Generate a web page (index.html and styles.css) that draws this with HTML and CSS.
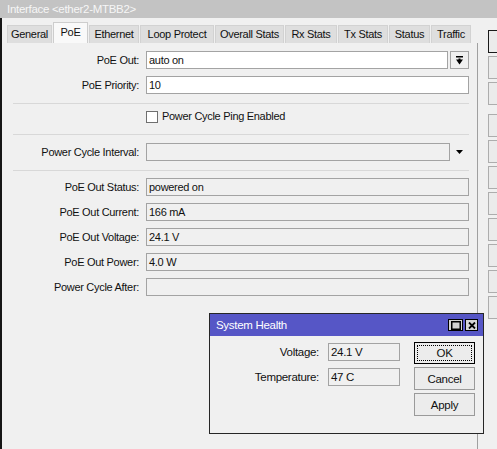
FILE: index.html
```html
<!DOCTYPE html>
<html>
<head>
<meta charset="utf-8">
<title>Interface</title>
<link rel="stylesheet" href="styles.css">
</head>
<body>
<div class="win">
  <div class="titlebar">Interface &lt;ether2-MTBB2&gt;</div>
  <div class="main">
    <div class="left">
      <div class="tabs">
        <div class="tab t-general">General</div>
        <div class="tab t-poe sel">PoE</div>
        <div class="tab t-eth">Ethernet</div>
        <div class="tab t-loop">Loop Protect</div>
        <div class="tab t-overall">Overall Stats</div>
        <div class="tab t-rx">Rx Stats</div>
        <div class="tab t-tx">Tx Stats</div>
        <div class="tab t-status">Status</div>
        <div class="tab t-traffic">Traffic</div>
      </div>
      <div class="panel">
        <div class="row">
          <div class="lbl">PoE Out:</div>
          <div class="combo">
            <div class="field edit">auto on</div>
            <div class="ddbtn">
              <svg width="7" height="9" viewBox="0 0 7 9"><rect x="0" y="0" width="7" height="1.5" fill="#000"/><path d="M0 3.5H7L3.5 8.5Z" fill="#000"/><rect x="2.5" y="2.5" width="2" height="2" fill="#000"/></svg>
            </div>
          </div>
        </div>
        <div class="row">
          <div class="lbl">PoE Priority:</div>
          <div class="field edit">10</div>
        </div>
        <div class="sep"></div>
        <div class="checkrow">
          <span class="cb"></span><span class="cbtext">Power Cycle Ping Enabled</span>
        </div>
        <div class="sep sep2"></div>
        <div class="row">
          <div class="lbl">Power Cycle Interval:</div>
          <div class="combo">
            <div class="field ro grow"></div>
            <div class="arrow">
              <svg width="7" height="4" viewBox="0 0 7 4"><path d="M0 0H7L3.5 4Z" fill="#000"/></svg>
            </div>
          </div>
        </div>
        <div class="sep sep3"></div>
        <div class="row">
          <div class="lbl">PoE Out Status:</div>
          <div class="field ro">powered on</div>
        </div>
        <div class="row">
          <div class="lbl">PoE Out Current:</div>
          <div class="field ro">166 mA</div>
        </div>
        <div class="row">
          <div class="lbl">PoE Out Voltage:</div>
          <div class="field ro">24.1 V</div>
        </div>
        <div class="row">
          <div class="lbl">PoE Out Power:</div>
          <div class="field ro">4.0 W</div>
        </div>
        <div class="row">
          <div class="lbl">Power Cycle After:</div>
          <div class="field ro"></div>
        </div>
      </div>
    </div>
    <div class="side">
      <div class="sbtn def"></div>
      <div class="sbtn"></div>
      <div class="sbtn"></div>
      <div class="sbtn grp"></div>
      <div class="sbtn"></div>
      <div class="sbtn"></div>
      <div class="sbtn"></div>
      <div class="sbtn"></div>
      <div class="sbtn"></div>
      <div class="sbtn"></div>
      <div class="sbtn"></div>
    </div>
  </div>

  <div class="dialog">
    <div class="dtitle">
      <span class="dtext">System Health</span>
      <span class="dctl">
        <span class="cbox"><svg width="10" height="9" viewBox="0 0 10 9"><rect x="0.75" y="0.75" width="8.5" height="7.5" fill="none" stroke="#000" stroke-width="1.5"/></svg></span>
        <span class="cbox close"><svg width="8" height="7" viewBox="0 0 8 7"><path d="M1 0.5L7 6.5M7 0.5L1 6.5" stroke="#000" stroke-width="1.8"/></svg></span>
      </span>
    </div>
    <div class="dbody">
      <div class="dform">
        <div class="drow">
          <div class="dlbl">Voltage:</div>
          <div class="field ro dfield">24.1 V</div>
        </div>
        <div class="drow">
          <div class="dlbl">Temperature:</div>
          <div class="field ro dfield">47 C</div>
        </div>
      </div>
      <div class="dbtns">
        <div class="btn ok"><span class="focus">OK</span></div>
        <div class="btn">Cancel</div>
        <div class="btn">Apply</div>
      </div>
    </div>
  </div>
</div>
</body>
</html>
```

FILE: styles.css
```css
* { box-sizing: border-box; }
html, body { margin: 0; padding: 0; }
body {
  width: 497px;
  height: 449px;
  overflow: hidden;
  background: #f0f0f0;
  font-family: "Liberation Sans", Arial, sans-serif;
  font-size: 11px;
  letter-spacing: -0.3px;
  color: #111;
}
.win {
  position: relative;
  width: 497px;
  height: 449px;
  display: flex;
  flex-direction: column;
}
.titlebar {
  height: 18px;
  background: #c3c3c3;
  color: #f6f6f6;
  font-size: 11.5px;
  line-height: 18px;
  padding-left: 7px;
}
.main {
  flex: 1;
  display: flex;
}
.left {
  width: 478px;
  border-left: 2px solid #161616;
  display: flex;
  flex-direction: column;
}
.tabs {
  height: 25px;
  display: flex;
  align-items: flex-end;
  gap: 1px;
  padding-left: 5px;
}
.tab {
  height: 18px;
  background: #dedede;
  border: 1px solid #d2d2d2;
  border-bottom: none;
  text-align: center;
  line-height: 17px;
  white-space: nowrap;
}
.tab.sel {
  height: 21px;
  background: #f9f9f9;
  border-color: #cdcdcd;
  line-height: 18px;
}
.t-general { width: 45px; }
.t-poe { width: 35px; }
.t-eth { width: 50px; }
.t-loop { width: 74px; }
.t-overall { width: 69px; }
.t-rx { width: 52px; }
.t-tx { width: 50px; }
.t-status { width: 41px; }
.t-traffic { width: 40px; }

.panel {
  flex: 1;
  border-right: 1px solid #a0a0a0;
  padding: 8px 8px 0 0;
}
.row {
  display: grid;
  grid-template-columns: 137px 1fr;
  column-gap: 7px;
  height: 18px;
  margin-bottom: 7px;
}
.lbl {
  text-align: right;
  line-height: 18px;
  white-space: nowrap;
}
.field {
  height: 18px;
  border: 1px solid #a3a3a3;
  padding-left: 2px;
  line-height: 16px;
  white-space: nowrap;
}
.field.edit { background: #fff; }
.field.ro { background: #f0f0f0; }
.combo {
  display: flex;
  gap: 2px;
}
.combo .field { flex: 1; }
.ddbtn {
  width: 19px;
  height: 18px;
  border: 1px solid #a3a3a3;
  background: #f0f0f0;
  display: flex;
  align-items: center;
  justify-content: center;
}
.arrow {
  width: 19px;
  margin-left: -2px;
  display: flex;
  align-items: center;
  justify-content: center;
}
.sep {
  height: 1px;
  background: #d8d8d8;
  margin: 9px 0 0 11px;
}
.sep2 { margin-top: 11px; }
.sep3 { margin-top: 9px; margin-bottom: 7px; }
.checkrow {
  display: flex;
  align-items: center;
  height: 13px;
  margin: 6px 0 0 144px;
}
.cb {
  width: 12px;
  height: 12px;
  border: 1px solid #6f6f6f;
  background: #fff;
  margin-right: 4px;
}
.cbtext { line-height: 13px; }
.sep2 + .row { margin-top: 8px; }

.side {
  flex: 1;
  padding: 12px 0 0 10px;
  display: flex;
  flex-direction: column;
  overflow: hidden;
}
.sbtn {
  width: 30px;
  height: 23px;
  flex: none;
  margin-bottom: 3px;
  border: 1px solid #adadad;
  background: #ebebeb;
}
.sbtn.def { border-color: #1a1a1a; }
.sbtn.grp { margin-top: 6px; }

.dialog {
  position: absolute;
  left: 209px;
  top: 313px;
  width: 275px;
  height: 121px;
  border: 1px solid #262626;
  background: #f0f0f0;
}
.dtitle {
  height: 22px;
  background: #5656c6;
  color: #fff;
  display: flex;
  align-items: center;
  justify-content: space-between;
  padding: 0 5px 0 6px;
}
.dtext { font-size: 11.5px; }
.dctl { display: flex; gap: 2px; }
.cbox {
  width: 15px;
  height: 12px;
  background: #d4d4d4;
  border: 1px solid #000;
  display: flex;
  align-items: center;
  justify-content: center;
}
.cbox.close { width: 13px; }
.dbody {
  display: flex;
  padding: 6px 8px 0 0;
}
.dform { flex: 1; padding-top: 1px; }
.drow {
  display: grid;
  grid-template-columns: 109px 72px;
  column-gap: 9px;
  height: 18px;
  margin-bottom: 7px;
}
.dlbl {
  text-align: right;
  line-height: 18px;
  font-size: 11.5px;
}
.dfield { font-size: 11.5px; }
.dbtns {
  width: 61px;
  display: flex;
  flex-direction: column;
  gap: 3px;
}
.btn {
  height: 23px;
  border: 1px solid #9a9a9a;
  background: #ececec;
  font-size: 11.5px;
  display: flex;
  align-items: center;
  justify-content: center;
}
.btn.ok {
  border-color: #000;
  padding: 2px;
  height: 22px;
}
.focus {
  flex: 1;
  align-self: stretch;
  border: 1px dotted #000;
  display: flex;
  align-items: center;
  justify-content: center;
}
```
